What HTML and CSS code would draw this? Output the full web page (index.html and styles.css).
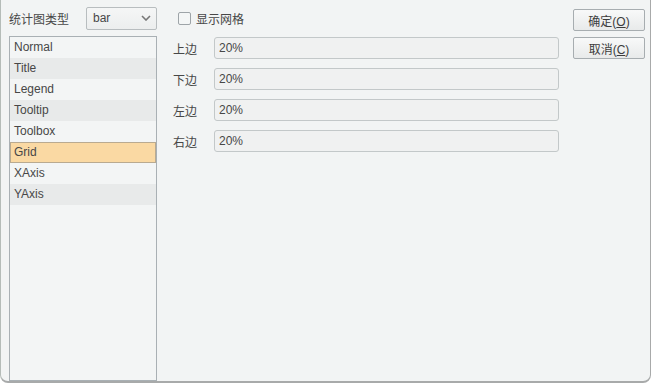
FILE: index.html
```html
<!DOCTYPE html>
<html lang="zh">
<head>
    <meta charset="UTF-8">
    <title>统计图设置</title>
    <link rel="stylesheet" href="styles.css">
</head>
<body>
    <div class="dialog">
        <!-- left side: chart type + option list -->
        <div class="side">
            <div class="type-row">
                <span class="type-label">统计图类型</span>
                <div class="select">
                    <span>bar</span>
                    <svg width="10" height="6" viewBox="0 0 10 6"><path d="M1 1 L5 5 L9 1" fill="none" stroke="#777" stroke-width="1.6"/></svg>
                </div>
            </div>
            <ul class="options">
                <li>Normal</li>
                <li class="alt">Title</li>
                <li>Legend</li>
                <li class="alt">Tooltip</li>
                <li>Toolbox</li>
                <li class="selected">Grid</li>
                <li>XAxis</li>
                <li class="alt">YAxis</li>
            </ul>
        </div>

        <!-- middle: grid settings -->
        <div class="main">
            <label class="check-row">
                <span class="checkbox"></span>
                <span>显示网格</span>
            </label>
            <div class="field">
                <span class="field-label">上边</span>
                <input type="text" value="20%">
            </div>
            <div class="field">
                <span class="field-label">下边</span>
                <input type="text" value="20%">
            </div>
            <div class="field">
                <span class="field-label">左边</span>
                <input type="text" value="20%">
            </div>
            <div class="field">
                <span class="field-label">右边</span>
                <input type="text" value="20%">
            </div>
        </div>

        <!-- right: buttons -->
        <div class="actions">
            <button>确定(<u>O</u>)</button>
            <button>取消(<u>C</u>)</button>
        </div>
    </div>
</body>
</html>
```

FILE: styles.css
```css
html, body {
    margin: 0;
    padding: 0;
    background-color: #ffffff;
}

body {
    width: 652px;
    height: 384px;
    font-family: "Liberation Sans", "Noto Sans CJK SC", sans-serif;
    font-size: 12px;
    color: #474747;
}

.dialog {
    box-sizing: border-box;
    width: 651px;
    height: 383px;
    background-color: #f2f4f4;
    border-left: 1px solid #b5bcb8;
    border-right: 1px solid #a8aaaa;
    border-bottom: 2px solid #a8aaaa;
    border-radius: 0 0 8px 8px;
    display: flex;
    padding: 7px 5px 0 8px;
}

.side {
    flex-shrink: 0;
    width: 148px;
    display: flex;
    flex-direction: column;
}

.type-row {
    display: flex;
    align-items: center;
    height: 22px;
}

.type-label {
    width: 77px;
    font-size: 12px;
}

.select {
    box-sizing: border-box;
    width: 71px;
    height: 23px;
    border: 1px solid #b8bdbf;
    border-radius: 2px;
    background: linear-gradient(#f5f6f6, #eceeee);
    display: flex;
    align-items: center;
    justify-content: space-between;
    padding: 0 5px 0 6px;
}

.options {
    list-style: none;
    margin: 7px 0 0 0;
    padding: 0;
    height: 344px;
    border: 1px solid #a9b0b4;
    background-color: #f3f5f5;
}

.options li {
    box-sizing: border-box;
    height: 21px;
    line-height: 21px;
    padding-left: 4px;
}

.options li:nth-child(even) {
    background-color: #e8eaea;
}

.options li.selected {
    background-color: #fad9a3;
    border: 1px solid #b9aa90;
    line-height: 19px;
    padding-left: 3px;
}

.main {
    flex-shrink: 0;
    width: 384px;
    margin-left: 21px;
    display: flex;
    flex-direction: column;
}

.check-row {
    display: flex;
    align-items: center;
    height: 22px;
    gap: 5px;
}

.checkbox {
    box-sizing: border-box;
    width: 13px;
    height: 13px;
    border: 1px solid #9ea4a8;
    border-radius: 2px;
    background-color: #f4f6f6;
}

.field {
    display: flex;
    align-items: center;
    height: 22px;
    margin-top: 9px;
}

.field:first-of-type {
    margin-top: 8px;
}

.field-label {
    width: 41px;
    margin-left: -5px;
}

.field input {
    box-sizing: border-box;
    width: 345px;
    height: 22px;
    border: 1px solid #c3c8c9;
    border-radius: 3px;
    background-color: #f0f1f1;
    font-family: "Liberation Sans", "Noto Sans CJK SC", sans-serif;
    font-size: 12px;
    color: #474747;
    padding: 0 4px;
    outline: none;
}

.actions {
    flex-shrink: 0;
    margin-left: 11px;
    display: flex;
    flex-direction: column;
    gap: 6px;
    padding-top: 2px;
}

.actions button {
    box-sizing: border-box;
    width: 72px;
    height: 22px;
    border: 1px solid #a7adb0;
    border-radius: 2px;
    background: linear-gradient(#f8f9f9, #e8eaea);
    font-family: "Liberation Sans", "Noto Sans CJK SC", sans-serif;
    font-size: 12px;
    color: #3c3c3c;
    padding: 0;
}

.actions button u {
    text-underline-offset: 1px;
}
```
